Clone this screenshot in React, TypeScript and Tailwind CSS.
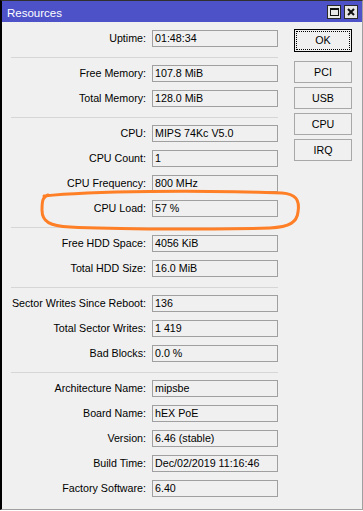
import React from "react";

type Row = [string, string];

const groups: Row[][] = [
  [["Uptime:", "01:48:34"]],
  [
    ["Free Memory:", "107.8 MiB"],
    ["Total Memory:", "128.0 MiB"],
  ],
  [
    ["CPU:", "MIPS 74Kc V5.0"],
    ["CPU Count:", "1"],
    ["CPU Frequency:", "800 MHz"],
    ["CPU Load:", "57 %"],
  ],
  [
    ["Free HDD Space:", "4056 KiB"],
    ["Total HDD Size:", "16.0 MiB"],
  ],
  [
    ["Sector Writes Since Reboot:", "136"],
    ["Total Sector Writes:", "1 419"],
    ["Bad Blocks:", "0.0 %"],
  ],
  [
    ["Architecture Name:", "mipsbe"],
    ["Board Name:", "hEX PoE"],
    ["Version:", "6.46 (stable)"],
    ["Build Time:", "Dec/02/2019 11:16:46"],
    ["Factory Software:", "6.40"],
  ],
];

function Field({ label, value }: { label: string; value: string }) {
  return (
    <div className="flex h-[25px] items-start">
      <div className="flex-1 h-[17px] leading-[17px] text-right whitespace-nowrap">{label}</div>
      <div className="ml-[6px] w-[126px] h-[17px] border border-[#a0a0a0] bg-[#f0f0f0] pl-[2px] leading-[15px] whitespace-nowrap overflow-hidden">
        {value}
      </div>
    </div>
  );
}

function Btn({ children, focused }: { children: React.ReactNode; focused?: boolean }) {
  if (focused) {
    return (
      <div className="w-[58px] h-[23px] border border-black bg-[#f0f0f0] p-[1px]">
        <div className="w-full h-full border border-dotted border-black flex items-center justify-center leading-none">
          {children}
        </div>
      </div>
    );
  }
  return (
    <div className="w-[58px] h-[22px] border border-[#a8a8a8] bg-[#f0f0f0] flex items-center justify-center leading-none">
      {children}
    </div>
  );
}

export default function App() {
  return (
    <div
      className="w-[363px] h-[511px] bg-white text-[10.7px] text-black overflow-hidden"
      style={{ fontFamily: '"Liberation Sans", Arial, sans-serif' }}
    >
      <div className="relative w-[363px] h-[510px] border-t border-[#303030] border-l-2 border-l-black border-r border-r-[#a0a0a0] border-b border-b-[#a0a0a0] bg-[#f0f0f0] flex flex-col">
        {/* Title bar */}
        <div className="h-[21px] bg-[#4d52c9] flex items-start text-white shrink-0">
          <div className="pl-[5px] pt-[5px] text-[11.5px] leading-[14px] flex-1">Resources</div>
          <div className="flex gap-[3px] pt-[4px] pr-[4px]">
            <div className="w-[14px] h-[14px] border border-[#2a2a2a] bg-[#e6e6e6] flex items-center justify-center">
              <div className="w-[9px] h-[8px] border border-[#111] border-t-2"></div>
            </div>
            <div className="w-[14px] h-[14px] border border-[#2a2a2a] bg-[#e6e6e6] flex items-center justify-center">
              <svg width="8" height="8" viewBox="0 0 8 8">
                <path d="M1 1 L7 7 M7 1 L1 7" stroke="#111" strokeWidth="2" />
              </svg>
            </div>
          </div>
        </div>

        {/* Content */}
        <div className="flex">
          <div className="w-[276px] pt-[8px]">
            {groups.map((g, gi) => (
              <div key={gi}>
                {g.map(([l, v]) => (
                  <Field key={l} label={l} value={v} />
                ))}
                {gi < groups.length - 1 && (
                  <div className="ml-[9px] mt-[2px] mb-[7px] h-px bg-[#d6d6d6]"></div>
                )}
              </div>
            ))}
          </div>
          <div className="ml-[16px] pt-[7px] flex flex-col">
            <div className="mb-[9px]">
              <Btn focused>OK</Btn>
            </div>
            <div className="flex flex-col gap-[4px]">
              <Btn>PCI</Btn>
              <Btn>USB</Btn>
              <Btn>CPU</Btn>
              <Btn>IRQ</Btn>
            </div>
          </div>
        </div>

        {/* Orange annotation */}
        <svg
          className="absolute left-[-2px] top-[-1px] pointer-events-none"
          width="363"
          height="511"
          viewBox="0 0 363 511"
        >
          <path
            d="M44 196 C 90 191, 200 190, 282 193 C 296 194, 300 200, 298 212 C 297 222, 290 227, 270 228 C 210 230, 110 229, 70 227 C 50 226, 42 222, 42 210 C 42 200, 43 197, 48 195"
            fill="none"
            stroke="#ff7f27"
            strokeWidth="3"
            strokeLinecap="round"
          />
        </svg>
      </div>
    </div>
  );
}
